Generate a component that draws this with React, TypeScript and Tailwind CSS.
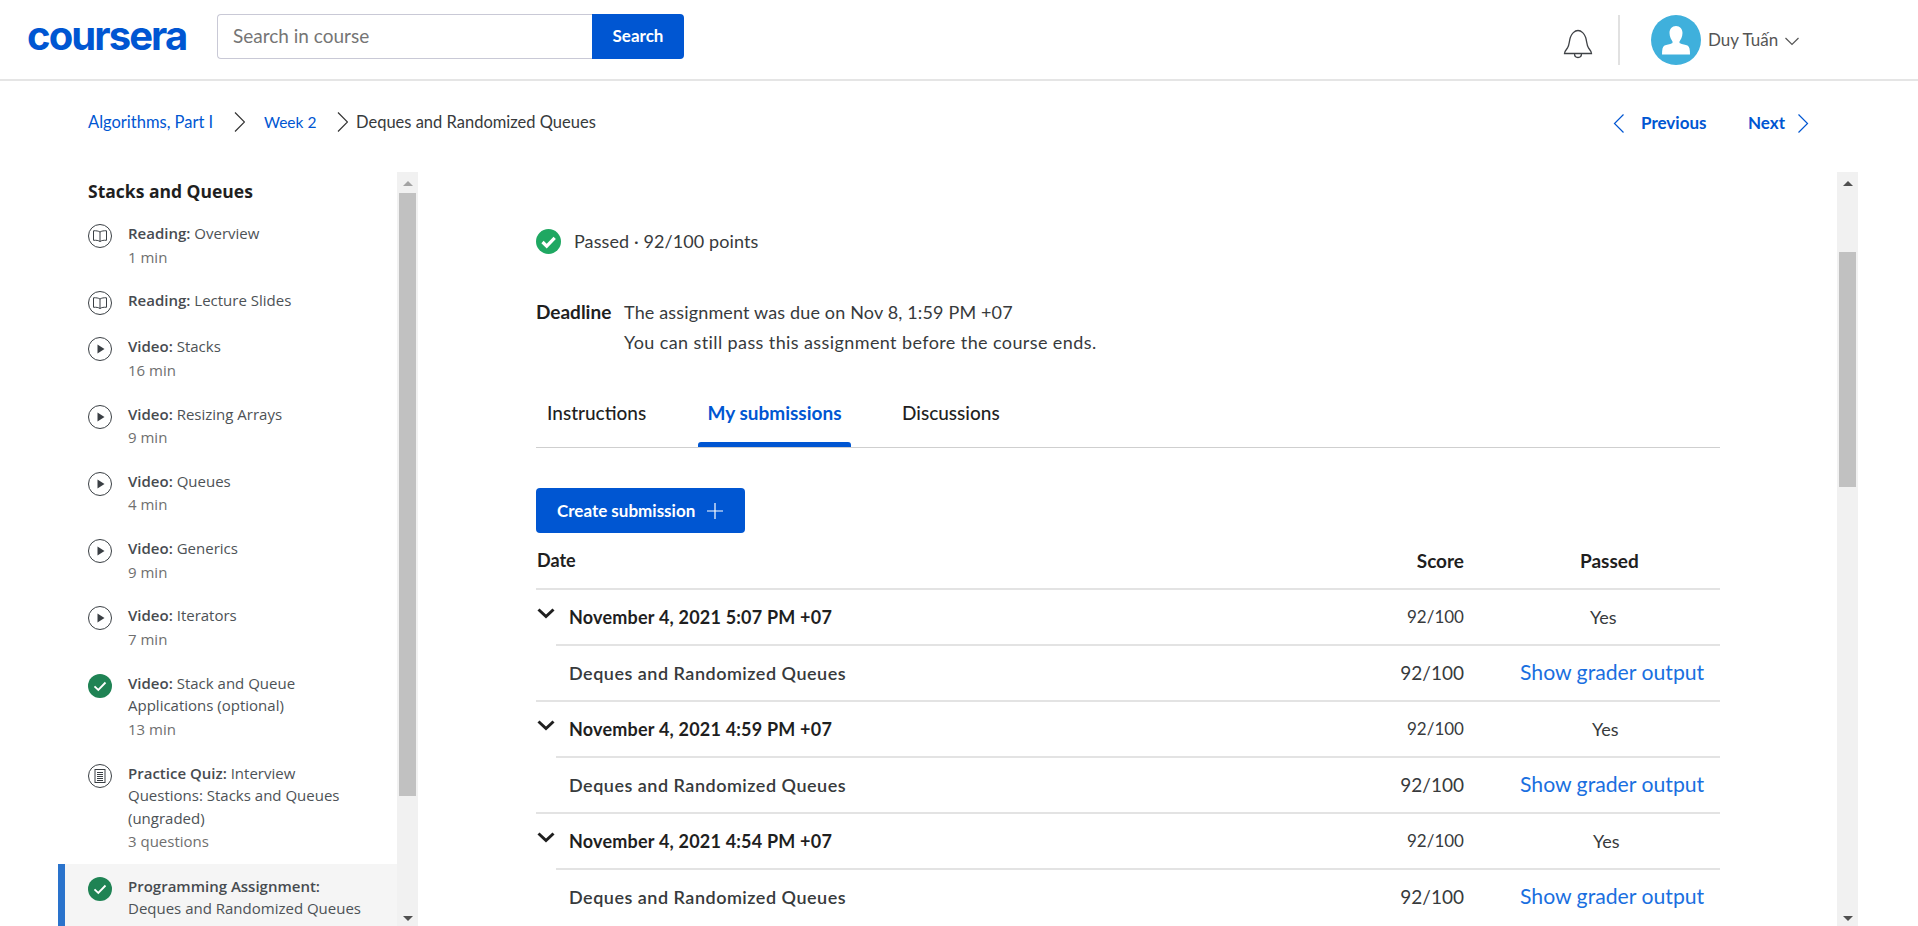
type ItemKind = "reading" | "video" | "done" | "quiz";

interface Item {
  kind: ItemKind;
  label: string;
  lines: string[];
  meta?: string;
  active?: boolean;
}

const items: Item[] = [
  { kind: "reading", label: "Reading:", lines: ["Overview"], meta: "1 min" },
  { kind: "reading", label: "Reading:", lines: ["Lecture Slides"] },
  { kind: "video", label: "Video:", lines: ["Stacks"], meta: "16 min" },
  { kind: "video", label: "Video:", lines: ["Resizing Arrays"], meta: "9 min" },
  { kind: "video", label: "Video:", lines: ["Queues"], meta: "4 min" },
  { kind: "video", label: "Video:", lines: ["Generics"], meta: "9 min" },
  { kind: "video", label: "Video:", lines: ["Iterators"], meta: "7 min" },
  { kind: "done", label: "Video:", lines: ["Stack and Queue", "Applications (optional)"], meta: "13 min" },
  {
    kind: "quiz",
    label: "Practice Quiz:",
    lines: ["Interview", "Questions: Stacks and Queues", "(ungraded)"],
    meta: "3 questions",
  },
  { kind: "done", label: "Programming Assignment:", lines: ["", "Deques and Randomized Queues"], active: true },
];

const submissions = [
  { date: "November 4, 2021 5:07 PM +07", yes: "pl-[126px]" },
  { date: "November 4, 2021 4:59 PM +07", yes: "pl-[128px]" },
  { date: "November 4, 2021 4:54 PM +07", yes: "pl-[129px]" },
];

function ItemIcon({ kind }: { kind: ItemKind }) {
  if (kind === "done") {
    return (
      <svg width="24" height="24" viewBox="0 0 24 24">
        <circle cx="12" cy="12" r="12" fill="#1f8354" />
        <path d="M6.5 12.3l3.8 3.6 7.2-7.4" fill="none" stroke="#fff" strokeWidth="1.8" />
      </svg>
    );
  }
  return (
    <svg width="24" height="24" viewBox="0 0 24 24" fill="none" stroke="#3a3f44" strokeWidth="1">
      <circle cx="12" cy="12" r="11.5" />
      {kind === "reading" && (
        <path d="M12 8C10.500 7 8 6.600 5.500 6.800v9.500c2.500-.2 5 .1 6.500 1.200 1.500-1.100 4-1.400 6.500-1.200V6.800C16 6.600 13.500 7 12 8zM12 8v9.500" />
      )}
      {kind === "video" && <path d="M9.500 7.500l7 4.500-7 4.500z" fill="#3a3f44" stroke="none" />}
      {kind === "quiz" && (
        <>
          <rect x="7" y="5.500" width="10" height="13" />
          <path d="M9 8.500h6M9 10.500h6M9 12.500h6M9 14.500h6M9 16.500h6" />
        </>
      )}
    </svg>
  );
}

function Thin({ d, className, w, h }: { d: string; className?: string; w: number; h: number }) {
  return (
    <svg width={w} height={h} viewBox={`0 0 ${w} ${h}`} fill="none" stroke="currentColor" strokeWidth="1.2" className={className}>
      <path d={d} />
    </svg>
  );
}

function Scrollbar({ thumbTop, thumbHeight, dark }: { thumbTop: string; thumbHeight: string; dark?: boolean }) {
  return (
    <div className="relative flex h-full w-[21px] shrink-0 flex-col items-center bg-[#f1f1f1]">
      <div className={`mt-[9px] h-0 w-0 border-x-[5px] border-b-[5px] border-x-transparent ${dark ? "border-b-[#505050]" : "border-b-[#a3a3a3]"}`} />
      <div className={`${thumbTop} ${thumbHeight} w-[17px] bg-[#c1c1c1]`} />
      <div className="absolute bottom-[5px] h-0 w-0 border-x-[5px] border-t-[5px] border-x-transparent border-t-[#505050]" />
    </div>
  );
}

function Header() {
  return (
    <header className="flex h-[81px] items-start border-b-2 border-[#e5e5e5] bg-white">
      <div className="ml-[27px] mt-[16px] w-[190px] font-['Inter',sans-serif] text-[40px] leading-[40px] font-bold tracking-[-1.9px] text-[#0056d2]">
        coursera
      </div>
      <div className="mt-[14px] flex h-[45px]">
        <div className="flex w-[375px] items-center rounded-l-[4px] border border-r-0 border-[#c9c9d6] pl-[15px] text-[19px] text-[#757575]">
          Search in course
        </div>
        <button className="w-[92px] rounded-r-[4px] bg-[#0056d2] pb-[2px] text-[17px] font-bold text-white">Search</button>
      </div>
      <div className="ml-auto flex items-start">
        <svg width="30" height="32" viewBox="0 0 30 32" fill="none" stroke="#3f4246" strokeWidth="1.300" className="mt-[27px]">
          <path d="M1.500 26.500h27c0-2-1-3-3-5.500-2-3-1.500-7-3-11-1-3-4-6.500-7.500-6.500S8.500 7 7.500 10c-1.500 4-1 8-3 11-2 2.500-3 3.500-3 5.500z" />
          <path d="M11.500 26.500c0 2.500 1.500 4 3.500 4s3.500-1.500 3.500-4" />
        </svg>
        <div className="ml-[25px] mt-[15px] h-[50px] w-[2px] bg-[#e1e1e1]" />
        <div className="ml-[31px] mt-[15px] h-[50px] w-[50px] overflow-hidden rounded-full bg-[#3fb0dc]">
          <svg width="50" height="50" viewBox="0 0 50 50" fill="#fff">
            <path d="M25 11c4 0 6.500 3 6.500 7 0 4-2 7-3 8.500v1.500c3 1.500 6 1.500 8 2.500 2 1 2.500 4 2.500 9h-28c0-5 .5-8 2.500-9 2-1 5-1 8-2.500v-1.500c-1-1.500-3-4.500-3-8.500 0-4 2.500-7 6.500-7z" />
          </svg>
        </div>
        <div className="ml-[7px] mt-[28px] w-[77px] text-[17px] leading-[24px] text-[#555]">Duy Tuấn</div>
        <Thin d="M.5 1l6.500 6.500L13.500 1" w={14} h={9} className="mr-[119px] mt-[37px] text-[#555]" />
      </div>
    </header>
  );
}

function Breadcrumbs() {
  return (
    <div className="flex h-[91px] items-start text-[16.500px] leading-[24px]">
      <a className="ml-[88px] mt-[29px] w-[125px] whitespace-nowrap text-[#0056d2]">Algorithms, Part I</a>
      <Thin d="M1 .5l9.500 9.500L1 19.500" w={11} h={20} className="ml-[21px] mt-[31px] text-[#333]" />
      <a className="ml-[19px] mt-[29px] w-[53px] whitespace-nowrap text-[15.500px] text-[#0056d2]">Week 2</a>
      <Thin d="M1 .5l9.500 9.500L1 19.500" w={11} h={20} className="ml-[20px] mt-[31px] text-[#333]" />
      <span className="ml-[8px] mt-[29px] text-[#373a3c]">Deques and Randomized Queues</span>
      <div className="ml-auto mr-[109px] mt-[30px] flex items-center text-[17px] font-bold text-[#0056d2]">
        <Thin d="M10.500.5L1.500 9.500l9 9" w={11} h={19} />
        <span className="ml-[17px] w-[66px]">Previous</span>
        <span className="ml-[41px] w-[34px]">Next</span>
        <Thin d="M.5.5l9 9-9 9" w={11} h={19} className="ml-[16px]" />
      </div>
    </div>
  );
}

function Sidebar() {
  return (
    <div className="flex h-full w-[418px] shrink-0 pl-[58px]">
      <aside className="w-[339px] overflow-hidden font-['Open_Sans',sans-serif] text-[15px] text-[#4d5256]">
        <h2 className="ml-[30px] mb-[10px] mt-[9px] text-[17.500px] leading-[21px] font-bold text-[#1f1f1f]">Stacks and Queues</h2>
        {items.map((item, i) => (
          <div
            key={i}
            className={`flex py-[10px] pr-[20px] ${item.meta ? "" : "min-h-[45px]"} ${
              item.active ? "border-l-[7px] border-[#2a73cc] bg-[#f5f5f5] pl-[23px] pt-[11px]" : "pl-[30px]"
            }`}
          >
            <div className="w-[40px] shrink-0 pt-[2px]">
              <ItemIcon kind={item.kind} />
            </div>
            <div className="leading-[22.500px]">
              {item.lines.map((line, j) => (
                <div key={j} className="whitespace-nowrap">
                  {j === 0 && <b className="font-semibold text-[#474b50]">{item.label} </b>}
                  {line}
                </div>
              ))}
              {item.meta && <div className="leading-[24.800px] text-[#6f6f6f]">{item.meta}</div>}
            </div>
          </div>
        ))}
      </aside>
      <Scrollbar thumbTop="mt-[7px]" thumbHeight="h-[603px]" />
    </div>
  );
}

function Submission({ date, yes }: { date: string; yes: string }) {
  return (
    <>
      <div className="flex h-[56px] items-center border-t-2 border-[#e3e3e3]">
        <svg width="18" height="11" viewBox="0 0 18 11" fill="none" stroke="#1f1f1f" strokeWidth="3" className="mb-[7px] ml-[1px] shrink-0">
          <path d="M1.500 1.500L9 8.500l7.500-7" />
        </svg>
        <span className="ml-[14px] flex-1 text-[18px] font-bold tracking-[0.2px] text-[#1f1f1f]">{date}</span>
        <span className="w-[70px] text-right text-[17px] text-[#373a3c]">92/100</span>
        <span className={`w-[256px] text-[18px] text-[#373a3c] ${yes}`}>Yes</span>
      </div>
      <div className="ml-[20px] flex h-[56px] items-center border-t-2 border-[#e3e3e3]">
        <span className="ml-[13px] flex-1 text-[18px] font-semibold tracking-[0.5px] text-[#373a3c]">Deques and Randomized Queues</span>
        <span className="w-[70px] text-right text-[19px] text-[#373a3c]">92/100</span>
        <a className="w-[256px] pl-[56px] text-[21.200px] whitespace-nowrap text-[#1a6fe0]">Show grader output</a>
      </div>
    </>
  );
}

function Main() {
  return (
    <div className="flex h-full flex-1">
      <main className="flex-1 overflow-hidden pl-[118px] pr-[117px] pt-[57px] text-[18px] text-[#373a3c]">
        <div className="flex h-[25px] items-center">
          <svg width="25" height="25" viewBox="0 0 25 25">
            <circle cx="12.500" cy="12.500" r="12.500" fill="#1fa862" />
            <path d="M6.500 13l4.200 4.200 8-8.400" fill="none" stroke="#fff" strokeWidth="3.200" />
          </svg>
          <span className="ml-[13px] tracking-[0.1px]">Passed · 92/100 points</span>
        </div>
        <div className="mt-[43px] flex leading-[30px]">
          <b className="w-[88px] text-[19px] font-bold text-[#1f1f1f]">Deadline</b>
          <div>
            <div className="tracking-[0.15px]">The assignment was due on Nov 8, 1:59 PM +07</div>
            <div className="tracking-[0.4px]">You can still pass this assignment before the course ends.</div>
          </div>
        </div>
        <nav className="mt-[25px] flex h-[66px] border-b border-[#cfcfcf] text-[19px] font-medium text-[#1f1f1f]">
          <span className="ml-[11px] mt-[17px] w-[101px] whitespace-nowrap">Instructions</span>
          <div className="relative ml-[50px] flex h-[65px] w-[153px] justify-center whitespace-nowrap pt-[17px] font-bold text-[#0056d2]">
            My submissions
            <div className="absolute bottom-0 left-0 h-[5px] w-full rounded-t-[3px] bg-[#0056d2]" />
          </div>
          <span className="ml-[51px] mt-[17px]">Discussions</span>
        </nav>
        <button className="mt-[40px] flex h-[45px] w-[209px] items-center rounded-[4px] bg-[#0056d2] pl-[21px] text-[17px] font-bold whitespace-nowrap text-white">
          Create submission
          <svg width="16" height="16" viewBox="0 0 16 16" className="ml-[12px]" fill="none" stroke="#fff" strokeWidth="1.200">
            <path d="M8 0v16M0 8h16" />
          </svg>
        </button>
        <div className="mt-[7px] flex h-[48px] items-start pt-[7px] text-[18px] font-bold text-[#1f1f1f]">
          <span className="flex-1 pl-[1px]">Date</span>
          <span className="w-[70px] text-right text-[19px]">Score</span>
          <span className="w-[256px] pl-[116px] text-[19px]">Passed</span>
        </div>
        {submissions.map((s) => (
          <Submission key={s.date} date={s.date} yes={s.yes} />
        ))}
      </main>
      <Scrollbar thumbTop="mt-[66px]" thumbHeight="h-[235px]" dark />
      <div className="w-[60px] shrink-0" />
    </div>
  );
}

export default function App() {
  return (
    <div className="h-[926px] overflow-hidden bg-white font-['Lato',sans-serif]">
      <Header />
      <Breadcrumbs />
      <div className="flex h-[754px]">
        <Sidebar />
        <Main />
      </div>
    </div>
  );
}
